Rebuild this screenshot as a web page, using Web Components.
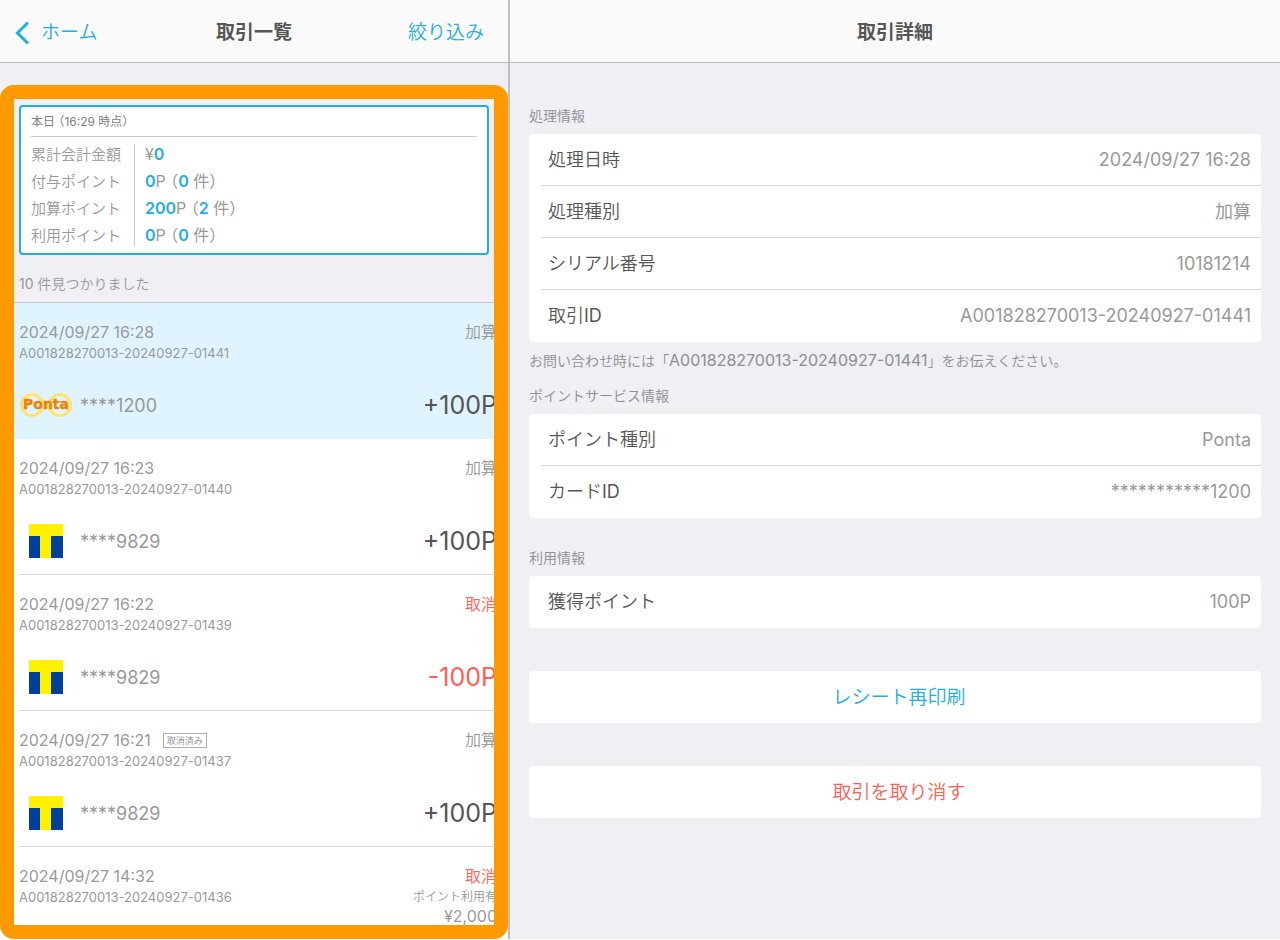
<!DOCTYPE html>
<html lang="ja">
<head>
<meta charset="utf-8">
<meta name="viewport" content="width=device-width, initial-scale=1">
<title>取引一覧</title>
<style>
  :root {
    --blue: #22ade4;
    --red: #ff6055;
    --ink: #555555;
    --muted: #999999;
    --line: #d6d6d8;
    --bg: #efeff4;
  }
  html, body { margin: 0; height: 100%; }
  body {
    font-family: Inter, "Noto Sans CJK JP", sans-serif;
    color: var(--ink);
    background: var(--bg);
  }
</style>
</head>
<body>
<split-view>
  <nav-bar slot="list-bar" heading="取引一覧" back="ホーム" action="絞り込み"></nav-bar>
  <nav-bar slot="detail-bar" heading="取引詳細"></nav-bar>

  <highlight-frame slot="list">
    <summary-card heading="本日 （16:29 時点）">
      <summary-line label="累計会計金額">¥<b>0</b></summary-line>
      <summary-line label="付与ポイント"><b>0</b>P （<b>0</b> 件）</summary-line>
      <summary-line label="加算ポイント"><b>200</b>P （<b>2</b> 件）</summary-line>
      <summary-line label="利用ポイント"><b>0</b>P （<b>0</b> 件）</summary-line>
    </summary-card>
    <result-count><span>10</span> 件見つかりました</result-count>
    <transaction-item selected date="2024/09/27 16:28" code="A001828270013-20240927-01441" kind="加算" card="****1200" amount="+100P"><ponta-logo slot="logo"></ponta-logo></transaction-item>
    <transaction-item date="2024/09/27 16:23" code="A001828270013-20240927-01440" kind="加算" card="****9829" amount="+100P"><t-logo slot="logo"></t-logo></transaction-item>
    <transaction-item cancel date="2024/09/27 16:22" code="A001828270013-20240927-01439" kind="取消" card="****9829" amount="-100P"><t-logo slot="logo"></t-logo></transaction-item>
    <transaction-item date="2024/09/27 16:21" tag="取消済み" code="A001828270013-20240927-01437" kind="加算" card="****9829" amount="+100P"><t-logo slot="logo"></t-logo></transaction-item>
    <transaction-item cancel date="2024/09/27 14:32" code="A001828270013-20240927-01436" kind="取消" usage="ポイント利用有" price="¥2,000"></transaction-item>
  </highlight-frame>

  <info-group slot="detail" heading="処理情報">
    <info-row label="処理日時">2024/09/27 16:28</info-row>
    <info-row label="処理種別">加算</info-row>
    <info-row label="シリアル番号">10181214</info-row>
    <info-row label="取引ID">A001828270013-20240927-01441</info-row>
    <note-text slot="note" code="A001828270013-20240927-01441"></note-text>
  </info-group>
  <info-group slot="detail" heading="ポイントサービス情報">
    <info-row label="ポイント種別">Ponta</info-row>
    <info-row label="カードID">***********1200</info-row>
  </info-group>
  <info-group slot="detail" heading="利用情報">
    <info-row label="獲得ポイント">100P</info-row>
  </info-group>
  <action-button slot="detail">レシート再印刷</action-button>
  <action-button slot="detail" danger>取引を取り消す</action-button>
</split-view>

<script>
const define = (name, render) => customElements.define(name, class extends HTMLElement {
  constructor() {
    super();
    this.attachShadow({ mode: "open" });
  }
  connectedCallback() {
    const template = document.createElement("template");
    template.innerHTML = render(this, key => this.getAttribute(key) || "");
    this.shadowRoot.replaceChildren(template.content.cloneNode(true));
  }
});

define("split-view", () => `
  <style>
    :host { display: grid; grid-template-columns: minmax(0, 51fr) minmax(0, 77fr); box-sizing: border-box; min-height: 100vh; border-bottom: 1px solid #fff; }
    .list { display: flex; flex-direction: column; box-sizing: border-box; border-right: 2px solid #bfbfc3; height: calc(100vh - 1px); overflow: hidden; }
    .detail { display: flex; flex-direction: column; }
    .content { padding: 41px 19px 24px; }
  </style>
  <section class="list"><slot name="list-bar"></slot><slot name="list"></slot></section>
  <section class="detail"><slot name="detail-bar"></slot><div class="content"><slot name="detail"></slot></div></section>`);

define("nav-bar", (el, at) => `
  <style>
    :host { display: block; flex: none; }
    header { display: grid; grid-template-columns: 1fr auto 1fr; align-items: center; box-sizing: border-box; height: 63px; padding-top: 4px; background: #fafafa; border-bottom: 1px solid #bcbcbe; }
    h1 { grid-column: 2; margin: 0; font-size: 19px; font-weight: 600; line-height: 28px; }
    a { display: flex; align-items: center; gap: 12px; margin-left: 15px; color: var(--blue); text-decoration: none; font-size: 19px; font-weight: 350; line-height: 28px; }
    button { grid-column: 3; justify-self: end; margin: 0 24px 0 0; padding: 0; border: 0; background: none; color: var(--blue); font: inherit; font-size: 19px; font-weight: 350; line-height: 28px; }
    svg { display: block; }
  </style>
  <header>
    ${at("back") ? `<a href="#home"><svg width="14" height="24" viewBox="0 0 14 24" fill="none" stroke="currentColor" stroke-width="3"><path d="M13 1.500 2.500 12 13 22.500"/></svg>${at("back")}</a>` : ""}
    <h1>${at("heading")}</h1>
    ${at("action") ? `<button type="button">${at("action")}</button>` : ""}
  </header>`);

define("highlight-frame", () => `
  <style>
    :host { display: block; position: relative; flex: 1; min-height: 0; margin-top: 22px; overflow: hidden; padding-top: 20px; }
    .ring { position: absolute; inset: 0; border: 14px solid #ff9900; border-radius: 14px; pointer-events: none; }
  </style>
  <slot></slot><div class="ring"></div>`);

define("summary-card", (el, at) => `
  <style>
    :host { display: block; margin: 0 19px; padding: 5px 10px 4px; border: 2px solid var(--blue); border-radius: 4px; background: #fff; font-feature-settings: "halt"; }
    h2 { margin: 0 0 4px; padding-bottom: 5px; border-bottom: 1px solid #cccccc; font-size: 12px; font-weight: 400; line-height: 19px; color: #808080; }
    .rows { display: grid; background: linear-gradient(#cccccc, #cccccc) 103px 3px / 1px calc(100% - 6px) no-repeat; }
  </style>
  <h2>${at("heading")}</h2><div class="rows"><slot></slot></div>`);

define("summary-line", (el, at) => `
  <style>
    :host { display: flex; line-height: 27px; font-size: 15px; color: var(--muted); }
    .label { flex: none; width: 104px; font-weight: 350; }
    .value { padding-left: 10px; font-size: 16px; }
    ::slotted(b) { color: var(--blue); font-weight: 600; }
  </style>
  <span class="label">${at("label")}</span><span class="value"><slot></slot></span>`);

define("result-count", () => `
  <style>
    :host { display: block; padding: 18px 19px 7px; border-bottom: 1px solid #c8c7cc; font-size: 14px; line-height: 22px; font-weight: 350; color: var(--muted); }
    ::slotted(span) { font-weight: 400; }
  </style><slot></slot>`);

define("transaction-item", (el, at) => `
  <style>
    :host { display: block; background: #fff; color: var(--muted); }
    :host([selected]) { background: #e0f4ff; }
    article { box-sizing: border-box; min-height: 136px; margin-left: 19px; padding: 17px 11px 0 0; border-bottom: 1px solid var(--line); }
    :host([selected]) article { border-color: transparent; }
    .line { display: flex; align-items: center; justify-content: space-between; }
    .date { display: flex; align-items: center; gap: 12px; font-size: 16px; line-height: 24px; }
    .kind { font-size: 16px; line-height: 24px; font-weight: 350; }
    .code { font-size: 13px; line-height: 18px; }
    .usage { font-size: 12px; line-height: 18px; font-weight: 350; }
    .price { text-align: right; font-size: 16px; line-height: 20px; }
    .tag { padding: 0 3px; border: 1px solid #b0b0b0; font-size: 9px; line-height: 13px; }
    .pay { display: flex; align-items: center; height: 40px; margin-top: 23px; }
    .mark { display: flex; justify-content: center; width: 54px; margin-right: 7px; }
    .card { flex: 1; font-size: 18px; }
    .amount { font-size: 25px; color: var(--ink); }
    :host([cancel]) .kind, :host([cancel]) .amount { color: var(--red); }
  </style>
  <article>
    <div class="line"><span class="date"><span>${at("date")}</span>${at("tag") ? `<span class="tag">${at("tag")}</span>` : ""}</span><span class="kind">${at("kind")}</span></div>
    <div class="line"><span class="code">${at("code")}</span><span class="usage">${at("usage")}</span></div>
    ${at("price") ? `<div class="price">${at("price")}</div>` : ""}
    ${at("card") ? `<div class="pay"><span class="mark"><slot name="logo"></slot></span><span class="card">${at("card")}</span><span class="amount">${at("amount")}</span></div>` : ""}
  </article>`);

define("ponta-logo", () => `
  <style>:host { display: block; } svg { display: block; } text { font-family: "DejaVu Sans", sans-serif; font-size: 14px; font-weight: 700; }</style>
  <svg width="54" height="26" viewBox="0 0 54 26" role="img" aria-label="Ponta">
    <path d="M20.500 5.500A10.600 10.600 0 1 0 20.500 20.500L33.500 5.500A10.600 10.600 0 1 1 33.500 20.500Z" fill="none" stroke="#ffe26f" stroke-width="3"/>
    <text x="27" y="17" text-anchor="middle" fill="#ef8200" stroke="#ef8200" stroke-width=".4">Ponta</text>
  </svg>`);

define("t-logo", () => `
  <style>:host { display: block; } svg { display: block; }</style>
  <svg width="34" height="34" viewBox="0 0 34 34" role="img" aria-label="T">
    <path fill="#fff100" d="M0 0h34v34H0z"/><path fill="#004098" d="M0 12h11v22H0zM22 12h12v22H22z"/>
  </svg>`);

define("info-group", (el, at) => `
  <style>
    :host { display: block; margin-bottom: 28px; }
    h2 { margin: 0; padding-bottom: 6px; font-size: 14px; font-weight: 350; line-height: 24px; color: #8e8e93; }
    .box { overflow: hidden; border-radius: 4px; background: #fff; }
    .note { margin-bottom: -17px; padding-top: 6px; }
  </style>
  <h2>${at("heading")}</h2><div class="box"><slot></slot></div>
  ${el.querySelector("[slot=note]") ? `<div class="note"><slot name="note"></slot></div>` : ""}`);

define("note-text", (el, at) => `
  <style>
    :host { display: block; font-size: 14px; line-height: 24px; font-weight: 350; color: #8e8e93; }
    p { margin: 0; }
    .code { font-size: 16px; font-weight: 400; }
  </style>
  <p>お問い合わせ時には「<span class="code">${at("code")}</span>」をお伝えください。</p>`);

define("info-row", (el, at) => `
  <style>
    :host { display: flex; justify-content: space-between; box-sizing: border-box; height: 52px; margin-left: 12px; padding: 0 10px 0 7px; border-bottom: 1px solid var(--line); font-size: 18px; line-height: 52px; }
    :host(:last-of-type) { border-bottom: 0; }
    .label { font-weight: 350; }
    .latin { font-weight: 400; }
    .value { color: var(--muted); }
  </style>
  <span class="label">${at("label").replace(/[A-Z]+/, `<span class="latin">$&</span>`)}</span><span class="value"><slot></slot></span>`);

define("action-button", () => `
  <style>
    :host { display: block; margin-top: 43px; }
    button { display: block; width: 100%; height: 52px; padding: 0 0 4px 8px; border: 0; border-radius: 4px; background: #fff; color: var(--blue); font: inherit; font-size: 19px; font-weight: 350; }
    :host([danger]) button { color: var(--red); }
  </style>
  <button type="button"><slot></slot></button>`);
</script>
</body>
</html>
